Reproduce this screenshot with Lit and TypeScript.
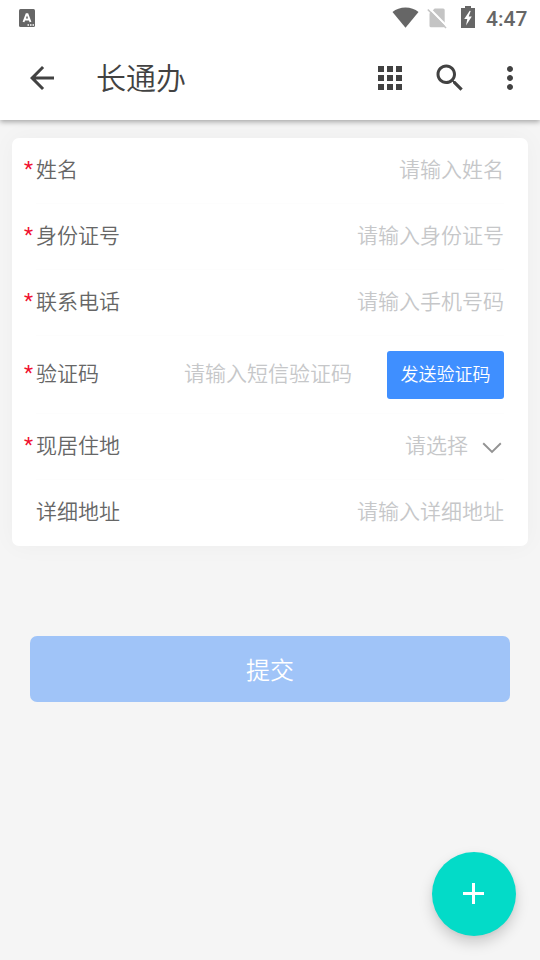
import { LitElement, html, css, nothing } from "lit";
import { customElement } from "lit/decorators.js";

interface Field {
  label: string;
  hint: string;
  required: boolean;
  kind: "text" | "code" | "select";
}

const FIELDS: Field[] = [
  { label: "姓名", hint: "请输入姓名", required: true, kind: "text" },
  { label: "身份证号", hint: "请输入身份证号", required: true, kind: "text" },
  { label: "联系电话", hint: "请输入手机号码", required: true, kind: "text" },
  { label: "验证码", hint: "请输入短信验证码", required: true, kind: "code" },
  { label: "现居住地", hint: "请选择", required: true, kind: "select" },
  { label: "详细地址", hint: "请输入详细地址", required: false, kind: "text" },
];

@customElement("status-bar")
class StatusBar extends LitElement {
  static styles = css`
    :host {
      display: flex;
      align-items: center;
      height: 36px;
      padding: 0 12px 0 19px;
      color: #666;
    }
    svg { display: block; flex: none; }
    .spacer { flex: 1; }
    .wifi { margin: 0 8px 2px 0; }
    .sim { margin-right: 14px; }
    .battery { margin: 0 11px 2px 0; }
    .time {
      font: 500 21px/36px Roboto, sans-serif;
      width: 42px;
      white-space: nowrap;
      margin-top: 1px;
    }
  `;
  render() {
    return html`
      <svg width="16" height="18" viewBox="0 0 16 18">
        <rect width="16" height="18" rx="1.5" fill="#666" />
        <path d="M4.500 13 7.500 5.200H8.500L11.500 13M5.500 10.500H10.500" fill="none" stroke="#fff" stroke-width="1.900" />
        <path d="M8.500 15.300h1.500v1.500H8.500zM11 15.300h1.500v1.500H11zM13.500 15.300H15v1.500h-1.500z" fill="#fff" />
      </svg>
      <div class="spacer"></div>
      <svg class="wifi" width="27" height="21" viewBox="0 0 27 21">
        <path d="M13.500 20.800.5 5C4 2.200 8.500 .5 13.500 .5S23 2.200 26.500 5Z" fill="#666" />
      </svg>
      <svg class="sim" width="20" height="21" viewBox="0 0 20 21">
        <path d="M7.700 .5H16.200Q17.700 .5 17.700 2V17.700Q17.700 19.200 16.200 19.200H4Q2.500 19.200 2.500 17.700V5.500Z" fill="#c4c4c4" />
        <path d="M1.500 -.5 20.500 18.800" stroke="#fff" stroke-width="2.200" />
        <path d="M.8 1.500 19 20" stroke="#c4c4c4" stroke-width="1.600" />
      </svg>
      <svg class="battery" width="14" height="22" viewBox="0 0 14 22">
        <path d="M4 0h6v2h4v20H0V2h4Z" fill="#666" />
        <path d="M8.700 4.800 3.200 13H6.300L5 19.500 10.800 10.500H7.700L9.700 5Z" fill="#fff" />
      </svg>
      <span class="time">4:47</span>
    `;
  }
}

@customElement("app-toolbar")
class AppToolbar extends LitElement {
  static styles = css`
    :host {
      display: flex;
      align-items: center;
      height: 84px;
      padding: 0 12px 0 24px;
      color: #424242;
    }
    svg { display: block; flex: none; fill: #424242; }
    .title {
      flex: 1;
      margin-left: 36px;
      padding-bottom: 4px;
      font: 350 30px/42px "Noto Sans CJK SC", sans-serif;
    }
    .apps, .search { margin-right: 24px; }
  `;
  render() {
    return html`
      <svg width="36" height="36" viewBox="0 0 24 24">
        <path d="M20 11H7.830l5.590-5.590L12 4l-8 8 8 8 1.410-1.410L7.830 13H20z" />
      </svg>
      <div class="title">长通办</div>
      <svg class="apps" width="36" height="36" viewBox="0 0 24 24">
        <path d="M4 8h4V4H4zm6 12h4v-4h-4zm-6 0h4v-4H4zm0-6h4v-4H4zm6 0h4v-4h-4zm6-10v4h4V4zm-6 4h4V4h-4zm6 6h4v-4h-4zm0 6h4v-4h-4z" />
      </svg>
      <svg class="search" width="36" height="36" viewBox="0 0 24 24">
        <path d="M15.500 14h-.79l-.28-.27C15.410 12.590 16 11.110 16 9.500 16 5.910 13.090 3 9.500 3S3 5.910 3 9.500 5.910 16 9.500 16c1.610 0 3.090-.59 4.230-1.570l.27.28v.79l5 4.990L20.490 19zm-6 0C7.010 14 5 11.990 5 9.500S7.010 5 9.500 5 14 7.010 14 9.500 11.990 14 9.500 14z" />
      </svg>
      <svg width="36" height="36" viewBox="0 0 24 24">
        <path d="M12 8c1.100 0 2-.9 2-2s-.9-2-2-2-2 .9-2 2 .9 2 2 2zm0 2c-1.100 0-2 .9-2 2s.9 2 2 2 2-.9 2-2-.9-2-2-2zm0 6c-1.100 0-2 .9-2 2s.9 2 2 2 2-.9 2-2-.9-2-2-2z" />
      </svg>
    `;
  }
}

@customElement("app-root")
class AppRoot extends LitElement {
  static styles = css`
    :host {
      display: flex;
      flex-direction: column;
      position: relative;
      width: 540px;
      height: 960px;
      overflow: hidden;
      background: #f5f5f5;
      font-family: "Noto Sans CJK SC", sans-serif;
      font-weight: 350;
    }
    * { box-sizing: border-box; }
    header {
      flex: none;
      position: relative;
      z-index: 1;
      background: #fff;
      box-shadow: 0 2px 5px rgba(0, 0, 0, 0.32);
    }
    .card {
      margin: 18px 12px 0;
      padding: 0 24px 0 12px;
      border-radius: 7px;
      background: #fff;
      box-shadow: 0 0 24px rgba(0, 0, 0, 0.035);
    }
    .row {
      display: flex;
      height: 66px;
      font-size: 21px;
      line-height: 30px;
    }
    .row.code { height: 78px; }
    .star {
      width: 12px;
      align-self: center;
      padding-bottom: 5px;
      color: #f01030;
      font-family: Roboto, sans-serif;
      font-weight: 400;
      font-size: 21px;
    }
    .body {
      flex: 1;
      display: flex;
      align-items: center;
      border-bottom: 1px solid #fdfdfd;
    }
    .row:last-child .body { border-bottom-color: transparent; }
    .label, .hint { padding-bottom: 5px; }
    .label { color: #666; }
    .hint { flex: 1; text-align: right; color: #c6c7c9; }
    .send {
      width: 117px;
      height: 48px;
      margin-left: 35px;
      padding: 0 0 3px;
      border: 0;
      border-radius: 3px;
      background: #3f8fff;
      color: #fff;
      font: 350 18px/45px "Noto Sans CJK SC", sans-serif;
    }
    .chevron { display: block; margin: 2px 2px 0 14px; }
    .submit {
      flex: none;
      height: 66px;
      margin: 90px 30px 0;
      padding: 0;
      border: 0;
      border-radius: 7px;
      background: #a0c4f8;
      color: #fff;
      font: 350 24px/66px "Noto Sans CJK SC", sans-serif;
    }
    .fab {
      position: absolute;
      right: 24px;
      bottom: 24px;
      display: grid;
      place-items: center;
      width: 84px;
      height: 84px;
      padding: 0;
      border: 0;
      border-radius: 50%;
      background: #03dbc8;
      box-shadow: 0 7px 14px rgba(0, 0, 0, 0.17), 0 1px 4px rgba(0, 0, 0, 0.05);
    }
  `;

  private control(f: Field) {
    if (f.kind === "code") return html`<button class="send">发送验证码</button>`;
    if (f.kind === "select")
      return html`<svg class="chevron" width="20" height="12" viewBox="0 0 20 12">
        <path d="M1.200 1.300 10 10 18.800 1.300" fill="none" stroke="#939393" stroke-width="1.900" />
      </svg>`;
    return nothing;
  }

  render() {
    return html`
      <header>
        <status-bar></status-bar>
        <app-toolbar></app-toolbar>
      </header>
      <section class="card">
        ${FIELDS.map(
          (f) => html`<div class="row ${f.kind}">
            <span class="star">${f.required ? "*" : ""}</span>
            <div class="body">
              <span class="label">${f.label}</span>
              <span class="hint">${f.hint}</span>
              ${this.control(f)}
            </div>
          </div>`
        )}
      </section>
      <button class="submit">提交</button>
      <button class="fab" aria-label="添加">
        <svg width="36" height="36" viewBox="0 0 36 36">
          <path d="M16 7h3v9h9v3h-9v9h-3v-9H7v-3h9z" fill="#fff" />
        </svg>
      </button>
    `;
  }
}
